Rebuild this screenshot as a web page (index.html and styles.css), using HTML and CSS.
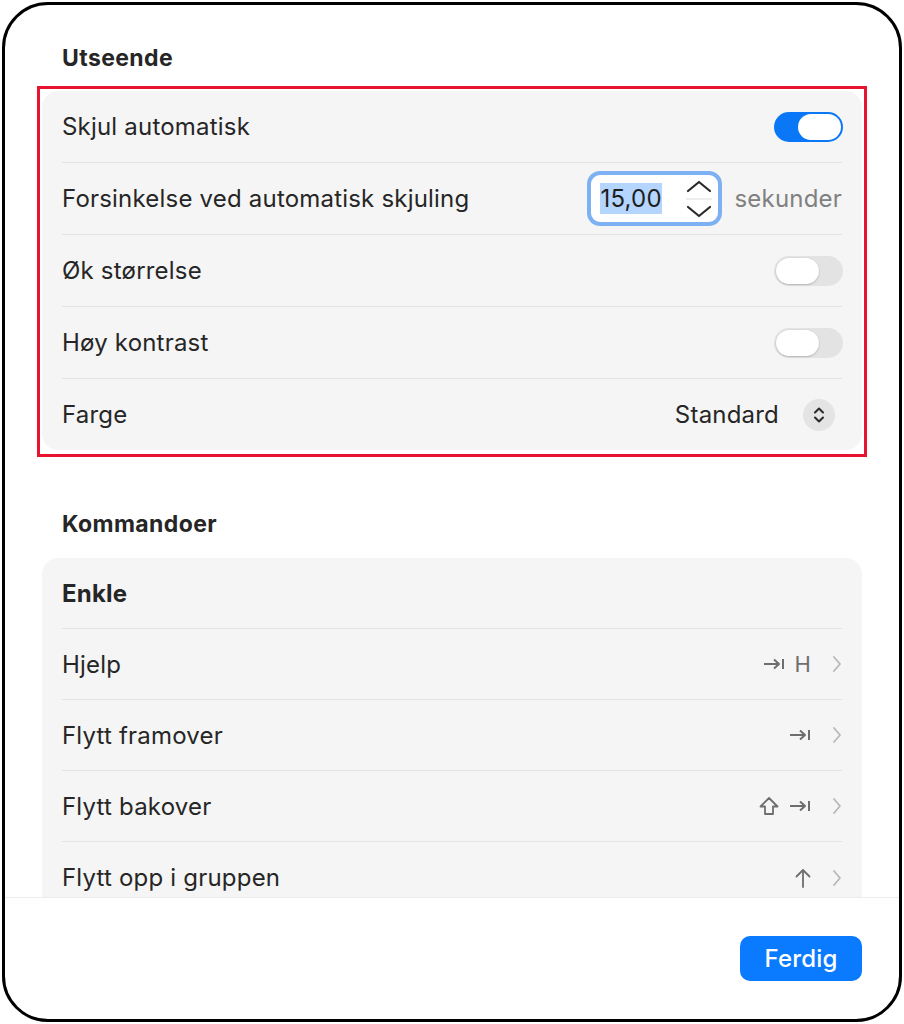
FILE: index.html
```html
<!DOCTYPE html>
<html lang="no">
<head>
<meta charset="utf-8">
<title>Innstillinger</title>
<link rel="stylesheet" href="styles.css">
</head>
<body>
<div class="window">
  <div class="scroll">
    <h2 class="section-title">Utseende</h2>
    <div class="highlight-box">
    <div class="card">
      <div class="row">
        <span class="label">Skjul automatisk</span>
        <span class="toggle on"><span class="knob"></span></span>
      </div>
      <div class="row">
        <span class="label">Forsinkelse ved automatisk skjuling</span>
        <span class="controls">
          <span class="stepper">
            <span class="value"><span class="sel">15,00</span></span>
            <span class="arrows">
              <svg width="28" height="38" viewBox="0 0 28 38">
                <path d="M3 11 L14 2 L25 11" fill="none" stroke="#2a2a2a" stroke-width="2.2" stroke-linecap="round" stroke-linejoin="round"/>
                <line x1="1" y1="19" x2="27" y2="19" stroke="#dcdcdc" stroke-width="1"/>
                <path d="M3 27 L14 36 L25 27" fill="none" stroke="#2a2a2a" stroke-width="2.2" stroke-linecap="round" stroke-linejoin="round"/>
              </svg>
            </span>
          </span>
          <span class="unit">sekunder</span>
        </span>
      </div>
      <div class="row">
        <span class="label">Øk størrelse</span>
        <span class="toggle"><span class="knob"></span></span>
      </div>
      <div class="row">
        <span class="label">Høy kontrast</span>
        <span class="toggle"><span class="knob"></span></span>
      </div>
      <div class="row">
        <span class="label">Farge</span>
        <span class="controls">
          <span class="popup-value">Standard</span>
          <span class="popup-btn">
            <svg width="14" height="20" viewBox="0 0 14 20">
              <path d="M3 7.5 L7 3.5 L11 7.5" fill="none" stroke="#2a2a2a" stroke-width="2" stroke-linecap="round" stroke-linejoin="round"/>
              <path d="M3 12.5 L7 16.5 L11 12.5" fill="none" stroke="#2a2a2a" stroke-width="2" stroke-linecap="round" stroke-linejoin="round"/>
            </svg>
          </span>
        </span>
      </div>
    </div>
    </div>

    <h2 class="section-title second">Kommandoer</h2>
    <div class="card">
      <div class="row cmd group">
        <span class="label bold">Enkle</span>
      </div>
      <div class="row cmd">
        <span class="label">Hjelp</span>
        <span class="shortcut">
          <svg class="tab" width="22" height="12" viewBox="0 0 22 12"><path d="M1 6 H16 M11 1.5 L16 6 L11 10.5" fill="none" stroke="#6e6e6e" stroke-width="2" stroke-linejoin="round"/><line x1="20" y1="1" x2="20" y2="11" stroke="#6e6e6e" stroke-width="2"/></svg>
          <span class="key">H</span>
          <svg class="chev" width="10" height="18" viewBox="0 0 10 18"><path d="M2 2 L8 9 L2 16" fill="none" stroke="#b8b8b8" stroke-width="1.8" stroke-linecap="round" stroke-linejoin="round"/></svg>
        </span>
      </div>
      <div class="row cmd">
        <span class="label">Flytt framover</span>
        <span class="shortcut">
          <svg class="tab" width="22" height="12" viewBox="0 0 22 12"><path d="M1 6 H16 M11 1.5 L16 6 L11 10.5" fill="none" stroke="#6e6e6e" stroke-width="2" stroke-linejoin="round"/><line x1="20" y1="1" x2="20" y2="11" stroke="#6e6e6e" stroke-width="2"/></svg>
          <svg class="chev" width="10" height="18" viewBox="0 0 10 18"><path d="M2 2 L8 9 L2 16" fill="none" stroke="#b8b8b8" stroke-width="1.8" stroke-linecap="round" stroke-linejoin="round"/></svg>
        </span>
      </div>
      <div class="row cmd">
        <span class="label">Flytt bakover</span>
        <span class="shortcut">
          <svg class="shift" width="20" height="20" viewBox="0 0 20 20"><path d="M10 2 L18.5 10.5 H14 V18 H6 V10.5 H1.5 Z" fill="none" stroke="#6e6e6e" stroke-width="1.8" stroke-linejoin="round"/></svg>
          <svg class="tab" width="22" height="12" viewBox="0 0 22 12"><path d="M1 6 H16 M11 1.5 L16 6 L11 10.5" fill="none" stroke="#6e6e6e" stroke-width="2" stroke-linejoin="round"/><line x1="20" y1="1" x2="20" y2="11" stroke="#6e6e6e" stroke-width="2"/></svg>
          <svg class="chev" width="10" height="18" viewBox="0 0 10 18"><path d="M2 2 L8 9 L2 16" fill="none" stroke="#b8b8b8" stroke-width="1.8" stroke-linecap="round" stroke-linejoin="round"/></svg>
        </span>
      </div>
      <div class="row cmd">
        <span class="label">Flytt opp i gruppen</span>
        <span class="shortcut">
          <svg class="up" width="16" height="20" viewBox="0 0 16 20"><path d="M8 19 V2 M1.5 8.5 L8 2 L14.5 8.5" fill="none" stroke="#6e6e6e" stroke-width="1.8" stroke-linecap="round" stroke-linejoin="round"/></svg>
          <svg class="chev" width="10" height="18" viewBox="0 0 10 18"><path d="M2 2 L8 9 L2 16" fill="none" stroke="#b8b8b8" stroke-width="1.8" stroke-linecap="round" stroke-linejoin="round"/></svg>
        </span>
      </div>
    </div>
  </div>
  <div class="footer">
    <button class="done">Ferdig</button>
  </div>
</div>
</body>
</html>
```

FILE: styles.css
```css
* { box-sizing: border-box; }
html, body {
  margin: 0;
  padding: 0;
  background: #ffffff;
}
body {
  font-family: Inter, "Liberation Sans", sans-serif;
  color: #262626;
  letter-spacing: 0.2px;
}
.window {
  margin: 2px;
  width: 900px;
  height: 1020px;
  border: 3px solid #000;
  border-radius: 46px;
  background: #fff;
  overflow: hidden;
  display: flex;
  flex-direction: column;
}
.scroll {
  height: 892px;
  overflow: hidden;
  padding: 40px 37px 0 37px;
  flex: none;
}
.section-title {
  margin: 0 0 15px 20px;
  font-size: 23px;
  line-height: 26px;
  font-weight: 700;
  letter-spacing: 0.4px;
  color: #262626;
}
.section-title.second {
  margin-top: 54px;
  margin-bottom: 21px;
}
.highlight-box {
  margin: 0 -5px;
  border: 3px solid #e8132e;
  padding: 2px 2px 4px 2px;
}
.card {
  background: #f5f5f5;
  border-radius: 16px;
  padding: 0 20px;
}
.row {
  height: 72px;
  border-bottom: 1px solid #e4e4e4;
  display: flex;
  align-items: center;
  justify-content: space-between;
}
.row:last-child { border-bottom: none; height: 71px; }
.row.cmd { height: 71px; }
.label {
  font-size: 24px;
  color: #262626;
}
.label.bold { font-weight: 700; }
.toggle {
  width: 69px;
  height: 30px;
  margin-right: -1px;
  border-radius: 15px;
  background: #e3e3e3;
  display: flex;
  align-items: center;
  padding: 0 2px;
}
.toggle .knob {
  width: 43px;
  height: 26px;
  border-radius: 13px;
  background: #fff;
  box-shadow: 0 1px 2px rgba(0,0,0,0.18), 0 0 0 0.5px rgba(0,0,0,0.05);
}
.toggle.on {
  background: #0a78f6;
  justify-content: flex-end;
}
.toggle.on .knob { box-shadow: none; }
.controls {
  display: flex;
  align-items: center;
}
.stepper {
  width: 135px;
  height: 55px;
  border: 4px solid #7eb1f4;
  border-radius: 13px;
  background: #fff;
  display: flex;
  align-items: center;
  justify-content: space-between;
  padding: 0 5px 0 9px;
}
.value {
  font-size: 24px;
  color: #1e1e1e;
}
.sel {
  background: #b4d5fe;
  padding: 1px 0;
}
.arrows {
  display: flex;
  align-items: center;
}
.unit {
  margin-left: 12px;
  font-size: 24px;
  color: #808080;
}
.popup-value {
  font-size: 24px;
  color: #262626;
}
.popup-btn {
  width: 32px;
  height: 32px;
  margin-left: 24px;
  margin-right: 7px;
  border-radius: 50%;
  background: #e4e4e4;
  display: flex;
  align-items: center;
  justify-content: center;
}
.shortcut {
  display: flex;
  align-items: center;
  color: #6e6e6e;
}
.shortcut .shift { margin-right: 10px; }
.shortcut .key {
  font-size: 22px;
  margin-left: 9px;
  color: #6e6e6e;
}
.shortcut .chev { margin-left: 21px; }
.footer {
  flex: 1;
  border-top: 1px solid #ececec;
  display: flex;
  justify-content: flex-end;
  align-items: flex-start;
  padding: 38px 37px 0 0;
}
.done {
  width: 122px;
  height: 45px;
  border: none;
  border-radius: 10px;
  background: #0a7aff;
  color: #fff;
  font-family: Inter, "Liberation Sans", sans-serif;
  font-size: 24px;
  font-weight: 500;
  letter-spacing: 0.2px;
  padding: 0;
}
```
